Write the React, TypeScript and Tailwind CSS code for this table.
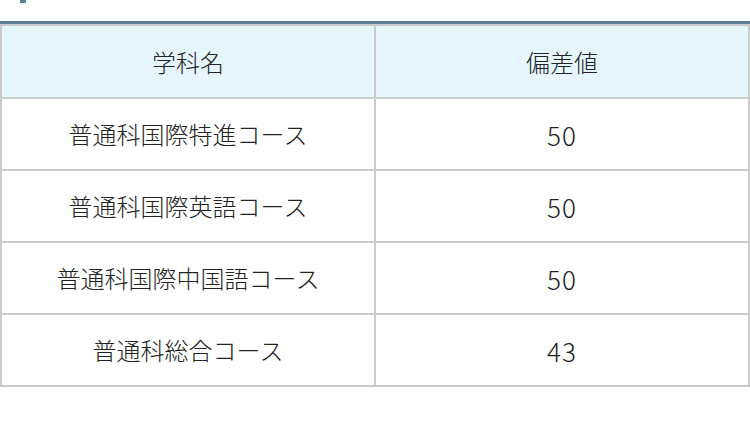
import React from 'react';

const rows = [
  { name: '普通科国際特進コース', score: '50' },
  { name: '普通科国際英語コース', score: '50' },
  { name: '普通科国際中国語コース', score: '50' },
  { name: '普通科総合コース', score: '43' },
];

const jp = "font-['Noto_Sans_CJK_JP',sans-serif]";

export default function App() {
  return (
    <div className={`w-[750px] h-[427px] bg-white text-[#222] ${jp}`}>
      {/* heading tail */}
      <div className="h-[21px]">
        <div className="ml-[20px] w-[6px] h-[3px] bg-[#5b7e99]" />
      </div>
      <div className="h-[3px] bg-[#5b7e99]" />

      <table className="w-full border-collapse border-2 border-[#cbcbcb] table-fixed">
        <thead>
          <tr className="h-[73px] bg-[#e6f6fd]">
            <th className="border-2 border-[#cbcbcb] text-[24px] font-light text-center">学科名</th>
            <th className="border-2 border-[#cbcbcb] text-[24px] font-light text-center">偏差値</th>
          </tr>
        </thead>
        <tbody>
          {rows.map((row) => (
            <tr key={row.name} className="h-[72px]">
              <td className="border-2 border-[#cbcbcb] text-[24px] font-light text-center">{row.name}</td>
              <td className="border-2 border-[#cbcbcb] text-[26px] font-light tracking-[1px] text-center">{row.score}</td>
            </tr>
          ))}
        </tbody>
      </table>
    </div>
  );
}
